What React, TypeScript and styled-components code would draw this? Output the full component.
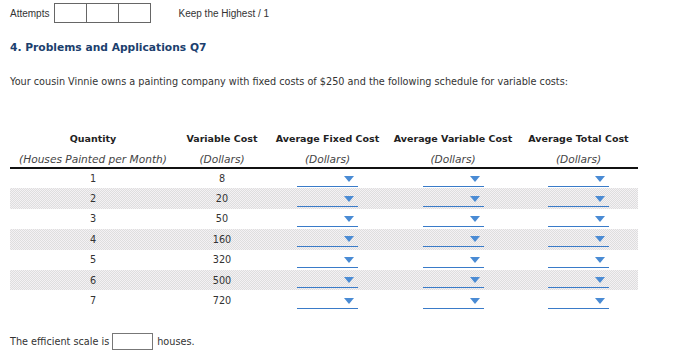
import React from "react"
import styled, { createGlobalStyle } from "styled-components"

const GlobalStyle = createGlobalStyle`
  html, body {
    margin: 0;
    padding: 0;
    background: #fff;
  }
  body {
    font-family: "DejaVu Sans", Verdana, sans-serif;
    font-size: 9.7px;
    color: #333;
  }
`

const rows = [
  { qty: 1, vc: 8 },
  { qty: 2, vc: 20 },
  { qty: 3, vc: 50 },
  { qty: 4, vc: 160 },
  { qty: 5, vc: 320 },
  { qty: 6, vc: 500 },
  { qty: 7, vc: 720 },
]

const columns = [
  { title: "Quantity", unit: "(Houses Painted per Month)", w: 166 },
  { title: "Variable Cost", unit: "(Dollars)", w: 92 },
  { title: "Average Fixed Cost", unit: "(Dollars)", w: 119 },
  { title: "Average Variable Cost", unit: "(Dollars)", w: 132 },
  { title: "Average Total Cost", unit: "(Dollars)", w: 119 },
]

const Page = styled.div`
  padding: 3px 10px 0 10px;
`

const AttemptsBar = styled.div`
  display: flex;
  align-items: center;
  height: 20px;
  font-family: "Liberation Sans", Arial, sans-serif;
  font-size: 10px;
  color: #333;
`

const AttemptsLabel = styled.span`
  margin-right: 5px;
`

const AttemptBoxes = styled.div`
  display: flex;
  border: 1px solid #666;
  height: 18px;
`

const AttemptBox = styled.div`
  width: 31px;
  & + & {
    border-left: 1px solid #666;
  }
`

const KeepLabel = styled.span`
  margin-left: 27px;
`

const Title = styled.h2`
  margin: 17px 0 0 0;
  font-size: 10.7px;
  font-weight: bold;
  color: #1c3f6e;
  line-height: 16px;
`

const Intro = styled.p`
  margin: 19px 0 0 0;
  line-height: 14px;
`

const Table = styled.table`
  margin-top: 42px;
  width: 628px;
  border-collapse: collapse;
  table-layout: fixed;
`

const HeadCell = styled.th<{ $w: number }>`
  width: ${p => p.$w}px;
  padding: 0;
  text-align: center;
  font-weight: normal;
  border-bottom: 2px solid #111;
  vertical-align: bottom;
`

const HeadTitle = styled.div`
  font-size: 9.5px;
  font-weight: bold;
  color: #222;
  line-height: 16px;
  padding-bottom: 2px;
  white-space: nowrap;
`

const HeadUnit = styled.div`
  font-size: 10.6px;
  font-style: italic;
  color: #444;
  line-height: 16px;
  padding-top: 2px;
  white-space: nowrap;
`

const Row = styled.tr<{ $shaded: boolean }>`
  height: 20.4px;
  background: ${p =>
    p.$shaded
      ? "repeating-conic-gradient(#dedede 0 25%, #f4f1f4 0 50%) 0 0 / 2px 2px"
      : "transparent"};
`

const Cell = styled.td`
  padding: 0;
  text-align: center;
  color: #333;
  vertical-align: middle;
`

const Dropdown = styled.div`
  position: relative;
  display: inline-block;
  width: 61px;
  height: 15px;
  border-bottom: 1px solid #3a7bc8;
  vertical-align: middle;
`

const Arrow = styled.span`
  position: absolute;
  right: 4px;
  top: 5px;
  width: 0;
  height: 0;
  border-left: 5px solid transparent;
  border-right: 5px solid transparent;
  border-top: 6px solid #4a8bd4;
`

const Footer = styled.div`
  display: flex;
  align-items: center;
  margin-top: 22px;
`

const AnswerBox = styled.div`
  width: 39px;
  height: 15px;
  border: 1px solid #777;
  margin: 0 4px 0 3px;
`

export default function App() {
  return (
    <>
      <GlobalStyle />
      <Page>
        <AttemptsBar>
          <AttemptsLabel>Attempts</AttemptsLabel>
          <AttemptBoxes>
            <AttemptBox />
            <AttemptBox />
            <AttemptBox />
          </AttemptBoxes>
          <KeepLabel>Keep the Highest / 1</KeepLabel>
        </AttemptsBar>

        <Title>4. Problems and Applications Q7</Title>

        <Intro>
          Your cousin Vinnie owns a painting company with fixed costs of $250 and the
          following schedule for variable costs:
        </Intro>

        <Table>
          <thead>
            <tr>
              {columns.map(c => (
                <HeadCell key={c.title} $w={c.w}>
                  <HeadTitle>{c.title}</HeadTitle>
                  <HeadUnit>{c.unit}</HeadUnit>
                </HeadCell>
              ))}
            </tr>
          </thead>
          <tbody>
            {rows.map((r, i) => (
              <Row key={r.qty} $shaded={i % 2 === 1}>
                <Cell>{r.qty}</Cell>
                <Cell>{r.vc}</Cell>
                {[0, 1, 2].map(k => (
                  <Cell key={k}>
                    <Dropdown>
                      <Arrow />
                    </Dropdown>
                  </Cell>
                ))}
              </Row>
            ))}
          </tbody>
        </Table>

        <Footer>
          The efficient scale is
          <AnswerBox />
          houses.
        </Footer>
      </Page>
    </>
  )
}
